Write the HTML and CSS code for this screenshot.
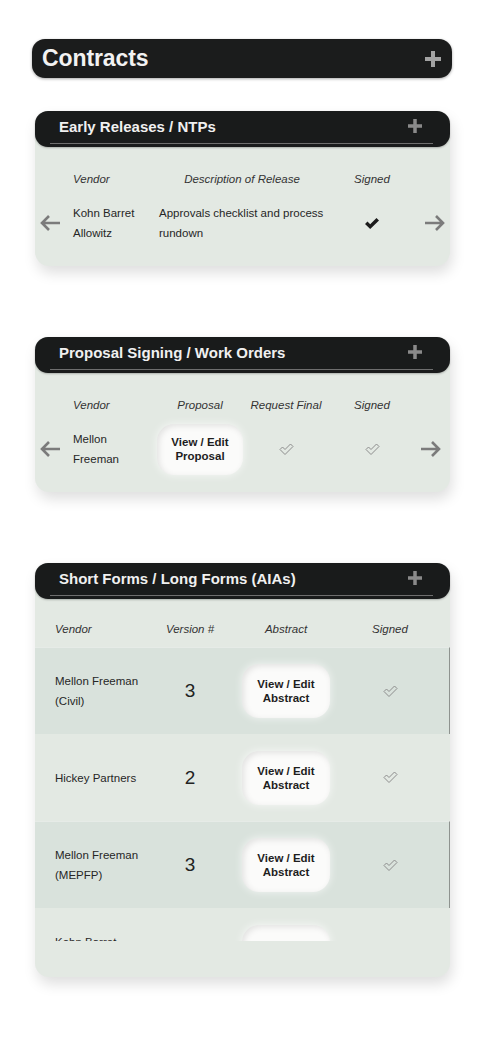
FILE: index.html
```html
<!DOCTYPE html>
<html lang="en">
<head>
<meta charset="utf-8">
<title>Contracts</title>
<link rel="stylesheet" href="styles.css">
</head>
<body>
<div class="page">
  <div class="title-bar">
    <h1 class="title">Contracts</h1>
    <svg class="plus-lg" viewBox="0 0 16 16" width="16" height="16"><rect x="6" y="0" width="4" height="16"/><rect x="0" y="6" width="16" height="4"/></svg>
  </div>

  <section class="card">
    <header class="card-head">
      <div class="card-head-inner">
        <h2 class="card-title">Early Releases / NTPs</h2>
        <svg class="plus-sm" viewBox="0 0 14 14" width="14" height="14"><rect x="5.25" y="0" width="3.5" height="14"/><rect x="0" y="5.25" width="14" height="3.5"/></svg>
      </div>
    </header>
    <div class="card-body grid-release">
      <span></span>
      <span class="lbl">Vendor</span>
      <span class="lbl center">Description of Release</span>
      <span class="lbl center">Signed</span>
      <span></span>

      <svg class="arrow arrow-left" viewBox="0 0 22 18" width="22" height="18"><path d="M21 9H3M10 2L3 9L10 16"/></svg>
      <div class="txt">Kohn Barret<br>Allowitz</div>
      <div class="txt">Approvals checklist and process<br>rundown</div>
      <svg class="check-solid" viewBox="0 0 16 13" width="16" height="13"><path d="M1 7L3.5 4.5L6.2 7.2L12.5 1L15 3.5L6.2 12Z"/></svg>
      <svg class="arrow arrow-right" viewBox="0 0 22 18" width="22" height="18"><path d="M1 9H19M12 2L19 9L12 16"/></svg>
    </div>
  </section>

  <section class="card">
    <header class="card-head">
      <div class="card-head-inner">
        <h2 class="card-title">Proposal Signing / Work Orders</h2>
        <svg class="plus-sm" viewBox="0 0 14 14" width="14" height="14"><rect x="5.25" y="0" width="3.5" height="14"/><rect x="0" y="5.25" width="14" height="3.5"/></svg>
      </div>
    </header>
    <div class="card-body grid-proposal">
      <span></span>
      <span class="lbl">Vendor</span>
      <span class="lbl center">Proposal</span>
      <span class="lbl center">Request Final</span>
      <span class="lbl center">Signed</span>
      <span></span>

      <svg class="arrow arrow-left" viewBox="0 0 22 18" width="22" height="18"><path d="M21 9H3M10 2L3 9L10 16"/></svg>
      <div class="txt">Mellon<br>Freeman</div>
      <button class="soft-btn btn-proposal">View / Edit<br>Proposal</button>
      <svg class="check-line" viewBox="0 0 15 13" width="15" height="13"><path d="M1 6.5L3.5 4L6 6.5L11.5 1L14 3.5L6 11.5Z"/></svg>
      <svg class="check-line" viewBox="0 0 15 13" width="15" height="13"><path d="M1 6.5L3.5 4L6 6.5L11.5 1L14 3.5L6 11.5Z"/></svg>
      <svg class="arrow arrow-right" viewBox="0 0 22 18" width="22" height="18"><path d="M1 9H19M12 2L19 9L12 16"/></svg>
    </div>
  </section>

  <section class="card">
    <header class="card-head">
      <div class="card-head-inner">
        <h2 class="card-title">Short Forms / Long Forms (AIAs)</h2>
        <svg class="plus-sm" viewBox="0 0 14 14" width="14" height="14"><rect x="5.25" y="0" width="3.5" height="14"/><rect x="0" y="5.25" width="14" height="3.5"/></svg>
      </div>
    </header>
    <div class="card-body forms">
      <div class="forms-head">
        <span class="lbl">Vendor</span>
        <span class="lbl center">Version #</span>
        <span class="lbl center">Abstract</span>
        <span class="lbl center">Signed</span>
      </div>
      <div class="forms-rows">
        <div class="form-row dark">
          <div class="txt">Mellon Freeman<br>(Civil)</div>
          <div class="ver">3</div>
          <button class="soft-btn btn-abstract">View / Edit<br>Abstract</button>
          <svg class="check-line" viewBox="0 0 15 13" width="15" height="13"><path d="M1 6.5L3.5 4L6 6.5L11.5 1L14 3.5L6 11.5Z"/></svg>
        </div>
        <div class="form-row">
          <div class="txt">Hickey Partners</div>
          <div class="ver">2</div>
          <button class="soft-btn btn-abstract">View / Edit<br>Abstract</button>
          <svg class="check-line" viewBox="0 0 15 13" width="15" height="13"><path d="M1 6.5L3.5 4L6 6.5L11.5 1L14 3.5L6 11.5Z"/></svg>
        </div>
        <div class="form-row dark">
          <div class="txt">Mellon Freeman<br>(MEPFP)</div>
          <div class="ver">3</div>
          <button class="soft-btn btn-abstract">View / Edit<br>Abstract</button>
          <svg class="check-line" viewBox="0 0 15 13" width="15" height="13"><path d="M1 6.5L3.5 4L6 6.5L11.5 1L14 3.5L6 11.5Z"/></svg>
        </div>
        <div class="form-row">
          <div class="txt">Kohn Barret<br>Allowitz</div>
          <div class="ver">1</div>
          <button class="soft-btn btn-abstract">View / Edit<br>Abstract</button>
          <svg class="check-line" viewBox="0 0 15 13" width="15" height="13"><path d="M1 6.5L3.5 4L6 6.5L11.5 1L14 3.5L6 11.5Z"/></svg>
        </div>
      </div>
    </div>
  </section>
</div>
</body>
</html>
```

FILE: styles.css
```css
* { box-sizing: border-box; }

html, body {
  margin: 0;
  padding: 0;
  background: #ffffff;
  font-family: "Liberation Sans", Arial, sans-serif;
  color: #262626;
}

.page {
  width: 420px;
  margin-left: 32px;
  padding-top: 39px;
  padding-bottom: 40px;
}

/* Main title bar */
.title-bar {
  height: 39px;
  background: #1b1c1c;
  border-radius: 13px;
  display: flex;
  align-items: center;
  justify-content: space-between;
  padding: 0 11px 0 10px;
  box-shadow: 0 1px 3px rgba(0, 0, 0, 0.35);
}

.title {
  margin: 0;
  font-size: 23px;
  font-weight: 700;
  color: #f2f2f2;
  letter-spacing: -0.1px;
}

.plus-lg { fill: #a3a3a3; display: block; }
.plus-sm { fill: #8a8a8a; display: block; }

/* Cards */
.card {
  margin: 33px 2px 0 3px;
  background: #e3e9e3;
  border-radius: 14px;
  box-shadow: 2px 7px 14px rgba(0, 0, 0, 0.13);
}

.card + .card { margin-top: 71px; }

.card-head {
  height: 36px;
  background: #191b1b;
  border-radius: 13px;
  padding: 0 17px 3px 15px;
  box-shadow: 0 1px 2px rgba(0, 0, 0, 0.25);
}

.card-head-inner {
  height: 33px;
  border-bottom: 1px solid #6e6e6e;
  display: flex;
  align-items: center;
  justify-content: space-between;
  padding: 0 11px 2px 9px;
}

.card-title {
  margin: 0;
  font-size: 15px;
  font-weight: 700;
  color: #f0f0f0;
}

.card-body {
  padding: 24px 0 17px 0;
}

.lbl {
  font-size: 11.5px;
  font-style: italic;
  color: #333;
  line-height: 16px;
  white-space: nowrap;
}

.center { justify-self: center; text-align: center; }

.txt {
  font-size: 11.5px;
  line-height: 20px;
  color: #262626;
}

/* Card 1 grid */
.grid-release {
  display: grid;
  grid-template-columns: 38px 86px 166px 94px 1fr;
  grid-template-rows: 16px 52px;
  row-gap: 10px;
  align-items: center;
}

/* Card 2 grid */
.grid-proposal {
  display: grid;
  grid-template-columns: 38px 84px 86px 86px 86px 1fr;
  grid-template-rows: 16px 52px;
  row-gap: 10px;
  align-items: center;
}

.arrow {
  fill: none;
  stroke: #7b7b7b;
  stroke-width: 2.6;
  display: block;
}
.arrow-left { justify-self: start; margin-left: 4px; }
.arrow-right { justify-self: start; margin-left: 5px; }

.check-solid { fill: #1c1c1c; justify-self: center; display: block; }
.check-line {
  fill: none;
  stroke: #8d8d8d;
  stroke-width: 1;
  justify-self: center;
  display: block;
}

.soft-btn {
  font-family: "Liberation Sans", Arial, sans-serif;
  font-size: 11.5px;
  font-weight: 700;
  line-height: 14px;
  color: #1e1e1e;
  border: none;
  background: #fbfbfa;
  border-radius: 17px;
  padding: 0;
  justify-self: center;
  box-shadow: inset 2px 2px 6px rgba(0, 0, 0, 0.1), 0 0 8px rgba(255, 255, 255, 0.7);
}

.btn-proposal { width: 86px; height: 51px; }
.btn-abstract { width: 88px; height: 54px; }

/* Card 3 table */
.forms { padding: 22px 0 36px 0; }

.forms-head,
.form-row {
  display: grid;
  grid-template-columns: 95px 80px 112px 96px;
  padding-left: 20px;
  align-items: center;
}

.forms-head { height: 16px; margin-bottom: 10px; }

.forms-rows {
  height: 294px;
  overflow: hidden;
}

.form-row {
  height: 87px;
}

.form-row.dark {
  background: #d9e2dc;
  border-right: 1px solid #8e938f;
  border-top: 1px solid #e6ebe7;
}

.ver {
  justify-self: center;
  font-size: 19px;
  color: #222;
}
```
